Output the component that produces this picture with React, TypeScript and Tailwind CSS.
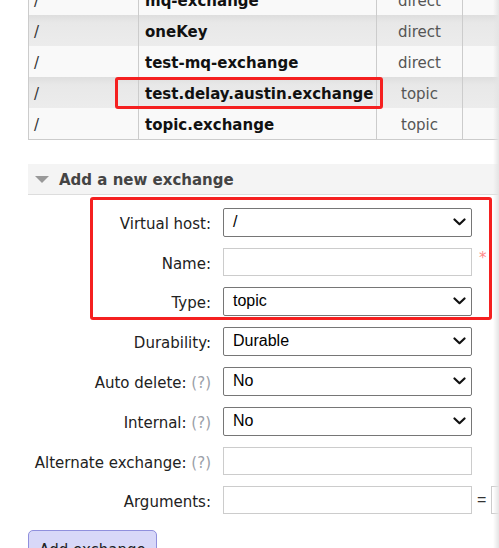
import React from "react";

const Chevron = () => (
  <svg
    className="pointer-events-none absolute right-[5px] top-1/2 -translate-y-1/2"
    width="13"
    height="8"
    viewBox="0 0 13 8"
    fill="none"
  >
    <path d="M1.5 1.5 L6.5 6.2 L11.5 1.5" stroke="#111" strokeWidth="2.2" strokeLinecap="round" strokeLinejoin="round" />
  </svg>
);

const Select = ({ value }: { value: string }) => (
  <div className="relative shrink-0 w-[249px] h-[29px] border border-[#767676] rounded-[2px] bg-white flex items-center pl-[9px] font-['Liberation_Sans',Arial,sans-serif] text-[16px] text-black">
    <span>{value}</span>
    <Chevron />
  </div>
);

const Input = () => <div className="shrink-0 w-[249px] h-[28px] border border-[#cccccc] bg-white" />;

const Help = () => <span className="text-[#9aa0a8]"> (?)</span>;

const Label = ({ children }: { children: React.ReactNode }) => (
  <div className="shrink-0 w-[183px] mr-[12px] pt-[5px] text-right whitespace-nowrap">{children}</div>
);

type Row = { vh: string; name: string; type: string; alt: boolean };

const rows: Row[] = [
  { vh: "/", name: "mq-exchange", type: "direct", alt: false },
  { vh: "/", name: "oneKey", type: "direct", alt: true },
  { vh: "/", name: "test-mq-exchange", type: "direct", alt: false },
  { vh: "/", name: "test.delay.austin.exchange", type: "topic", alt: true },
  { vh: "/", name: "topic.exchange", type: "topic", alt: false },
];

export default function App() {
  return (
    <div className="relative w-[499px] h-[548px] overflow-hidden bg-white font-['DejaVu_Sans',Verdana,sans-serif] text-[15px] text-[#222]">
      <div className="pl-[28px]">
        <table className="mt-[-16px] border-collapse w-[540px] table-fixed border-b border-l border-[#cccccc]">
          <colgroup>
            <col className="w-[110px]" />
            <col className="w-[238px]" />
            <col className="w-[86px]" />
            <col />
          </colgroup>
          <tbody>
            {rows.map((r, i) => (
              <tr
                key={i}
                className={
                  r.alt
                    ? "h-[31px] bg-[linear-gradient(#dedede,#e8e8e8_25%,#ececec)]"
                    : "h-[31px] bg-[#f9f9f9]"
                }
              >
                <td className="border-r border-[#cccccc] pl-[5px] pt-[3px] text-[#333] whitespace-nowrap">{r.vh}</td>
                <td className="border-r border-[#cccccc] pl-[6px] pt-[3px] font-bold text-[#111] whitespace-nowrap">{r.name}</td>
                <td className="border-r border-[#cccccc] pt-[3px] text-center text-[#555] whitespace-nowrap">{r.type}</td>
                <td></td>
              </tr>
            ))}
          </tbody>
        </table>

        <div className="mt-[24px] h-[31px] bg-[#f4f4f4] border-b border-[#dddddd] flex items-center pl-[7px]">
          <svg width="14" height="7" viewBox="0 0 14 7" className="mr-[10px] mt-[1px]">
            <path d="M0 0 L14 0 L7 7 Z" fill="#999" />
          </svg>
          <span className="pt-[3px] font-bold text-[#444]">Add a new exchange</span>
        </div>

        <div className="mt-[13px] flex flex-col gap-[11px] text-[#222]">
          <div className="flex items-center">
            <Label>Virtual host:</Label>
            <Select value="/" />
          </div>
          <div className="flex items-center">
            <Label>Name:</Label>
            <Input />
            <span className="shrink-0 ml-[7px] mt-[-6px] text-[#ff8888] text-[15px]">*</span>
          </div>
          <div className="flex items-center">
            <Label>Type:</Label>
            <Select value="topic" />
          </div>
          <div className="flex items-center">
            <Label>Durability:</Label>
            <Select value="Durable" />
          </div>
          <div className="flex items-center">
            <Label>
              Auto delete:<Help />
            </Label>
            <Select value="No" />
          </div>
          <div className="flex items-center">
            <Label>
              Internal:<Help />
            </Label>
            <Select value="No" />
          </div>
          <div className="flex items-center">
            <Label>
              Alternate exchange:<Help />
            </Label>
            <Input />
          </div>
          <div className="flex items-center">
            <Label>Arguments:</Label>
            <Input />
            <span className="shrink-0 ml-[5px] text-[#333] font-['Liberation_Sans',Arial,sans-serif] text-[16px]">=</span>
            <div className="ml-[5px] shrink-0 w-[100px] h-[28px] border border-[#cccccc] bg-white" />
          </div>
        </div>

        <button className="mt-[16px] w-[129px] h-[36px] rounded-[5px] border border-[#9090dd] bg-[#d8d8f8] text-[15px] text-[#222] flex items-start justify-center pt-[8px]">
          Add exchange
        </button>
      </div>

      <div className="absolute left-[115px] top-[77px] w-[268px] h-[32px] border-[3px] border-[#f52020] rounded-[3px]" />
      <div className="absolute left-[90px] top-[197px] w-[402px] h-[123px] border-[3px] border-[#f52020] rounded-[3px]" />
      <div className="absolute right-0 top-0 bottom-0 w-[6px] bg-[linear-gradient(to_right,rgba(230,230,230,0),#e4e4e4)]" />
    </div>
  );
}
